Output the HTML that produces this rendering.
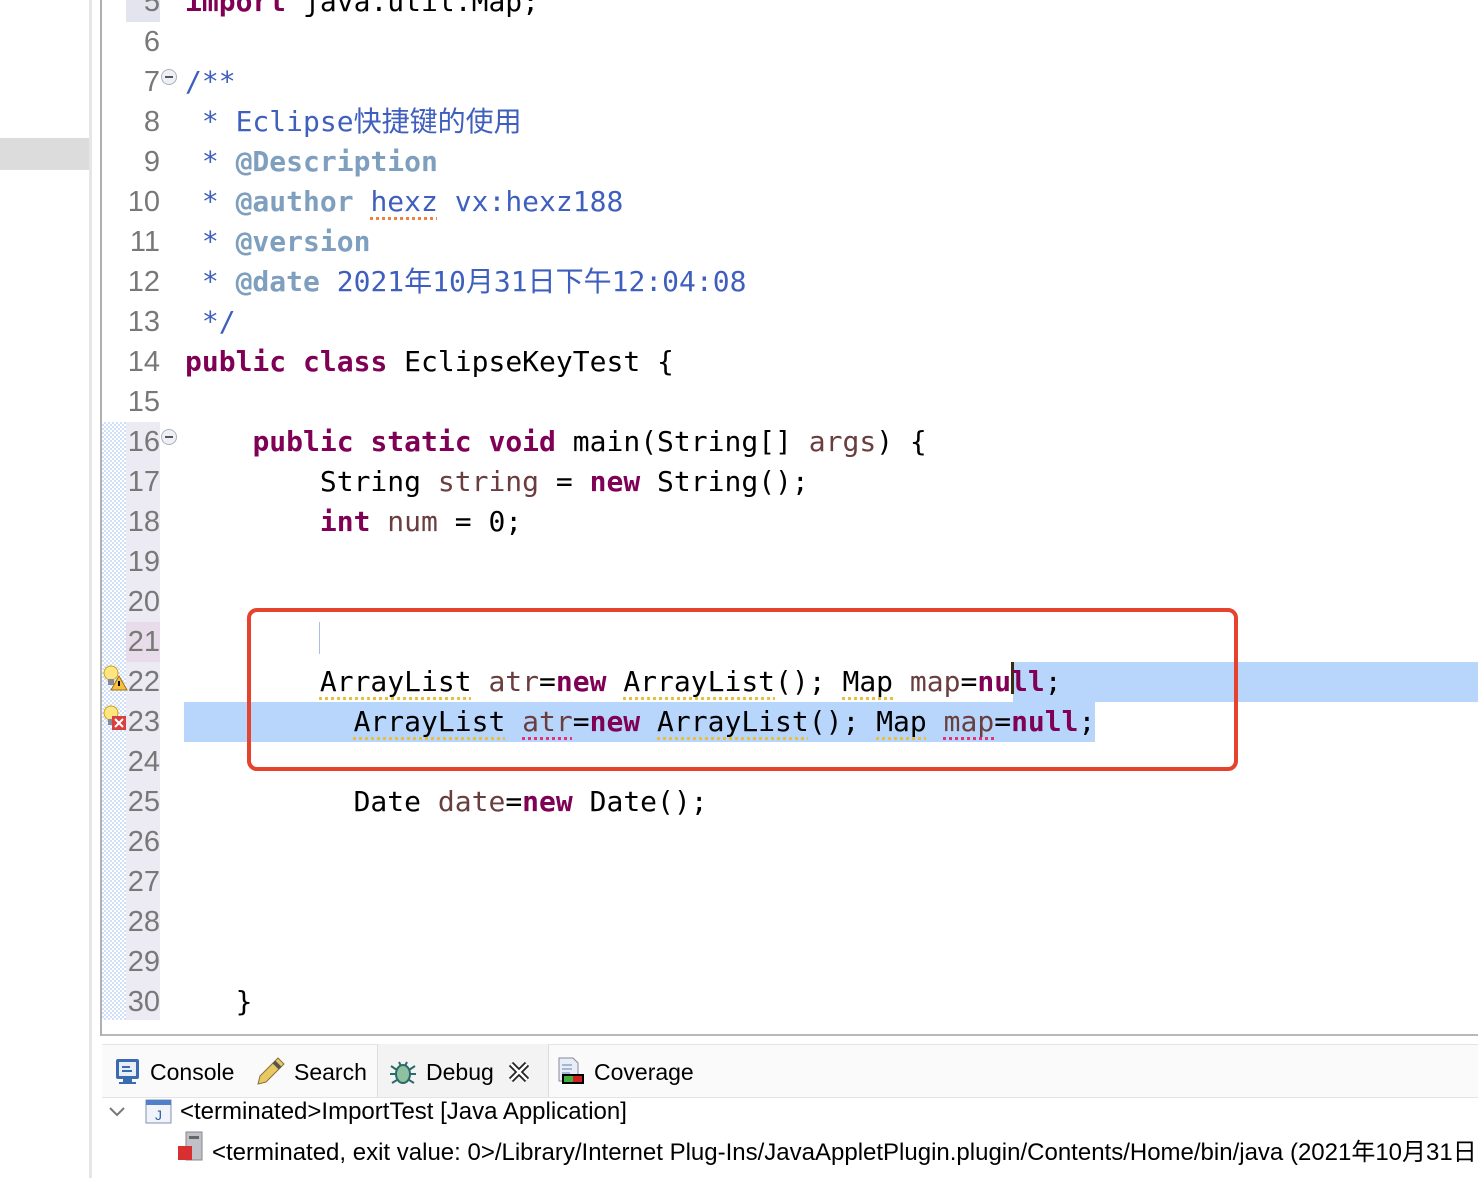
<!DOCTYPE html>
<html><head><meta charset="utf-8"><style>
body{margin:0;width:1478px;height:1178px;overflow:hidden;background:#fff;position:relative;font-family:"DejaVu Sans Mono","Noto Sans CJK SC",monospace}
.a{position:absolute}
.ln{position:absolute;left:100px;width:60px;text-align:right;font-family:"Liberation Sans",sans-serif;font-size:29px;color:#787878;height:40px;line-height:40px}
.c{position:absolute;white-space:pre;font-size:28px;height:40px;line-height:40px;color:#000}
.k{color:#7f0055;font-weight:bold}
.v{color:#6a3e3e}
.cm{color:#3f5fbf}
.t{color:#7f9fbf;font-weight:bold}
.w{text-decoration:underline dotted #e8c040 3px;text-underline-offset:6px}
.e{text-decoration:underline dotted #e83070 3px;text-underline-offset:6px}
.o{text-decoration:underline dotted #f08040 3px;text-underline-offset:6px}
.sel{position:absolute;background:#b8d6fb}
.bt{font-family:"Liberation Sans",sans-serif;font-size:23px;position:absolute;color:#000;white-space:nowrap}
</style></head><body>
<div class="a" style="left:0;top:138px;width:90px;height:32px;background:#dcdcdc"></div>
<div class="a" style="left:89px;top:0;width:3px;height:1178px;background:#e6e6e6"></div>
<div class="a" style="left:100px;top:0;width:2px;height:1036px;background:#b0b0b0"></div>
<div class="a" style="left:102px;top:422px;width:24px;height:598px;background:repeating-conic-gradient(#cfe0f8 0 25%,#fff 0 50%) 0 0/4px 4px"></div>
<div class="a" style="left:126px;top:0;width:34px;height:22px;background:#e4e4ef"></div>
<div class="a" style="left:126px;top:422px;width:34px;height:598px;background:#eceaf2"></div>
<div class="a" style="left:126px;top:622px;width:34px;height:40px;background:#e8dcea"></div>
<div class="a" style="left:102px;top:1034px;width:1376px;height:2px;background:#b8b8b8"></div>

<div class="sel" style="left:1013px;top:662px;width:465px;height:40px"></div>
<div class="sel" style="left:184px;top:702px;width:911px;height:40px"></div>
<div class="a" style="left:1011px;top:662px;width:3px;height:32px;background:#3a2a10"></div>
<div class="a" style="left:319px;top:622px;width:1px;height:32px;background:#a8c0e8"></div>

<div class="ln" style="top:-18px">5</div><div class="ln" style="top:22px">6</div><div class="ln" style="top:62px">7</div><div class="ln" style="top:102px">8</div><div class="ln" style="top:142px">9</div><div class="ln" style="top:182px">10</div><div class="ln" style="top:222px">11</div><div class="ln" style="top:262px">12</div><div class="ln" style="top:302px">13</div><div class="ln" style="top:342px">14</div><div class="ln" style="top:382px">15</div><div class="ln" style="top:422px">16</div><div class="ln" style="top:462px">17</div><div class="ln" style="top:502px">18</div><div class="ln" style="top:542px">19</div><div class="ln" style="top:582px">20</div><div class="ln" style="top:622px">21</div><div class="ln" style="top:662px">22</div><div class="ln" style="top:702px">23</div><div class="ln" style="top:742px">24</div><div class="ln" style="top:782px">25</div><div class="ln" style="top:822px">26</div><div class="ln" style="top:862px">27</div><div class="ln" style="top:902px">28</div><div class="ln" style="top:942px">29</div><div class="ln" style="top:982px">30</div>

<svg class="a" style="left:160px;top:68px" width="18" height="18"><circle cx="9" cy="9" r="7.5" fill="#eef0f4" stroke="#a8b0c0"/><path d="M5 9h8" stroke="#556" stroke-width="2"/></svg>
<svg class="a" style="left:160px;top:428px" width="18" height="18"><circle cx="9" cy="9" r="7.5" fill="#eef0f4" stroke="#a8b0c0"/><path d="M5 9h8" stroke="#556" stroke-width="2"/></svg>
<svg class="a" style="left:102px;top:664px" width="26" height="28"><circle cx="9" cy="9" r="7" fill="#ffe680" stroke="#c8a020"/><rect x="6" y="15" width="6" height="6" fill="#889"/><path d="M17 12l8 14h-16z" fill="#f5c040" stroke="#a07010"/><path d="M17 17v5" stroke="#000" stroke-width="2"/></svg>
<svg class="a" style="left:102px;top:704px" width="26" height="28"><circle cx="9" cy="9" r="7" fill="#ffe680" stroke="#c8a020"/><rect x="6" y="15" width="6" height="6" fill="#889"/><rect x="10" y="12" width="14" height="14" fill="#d84040"/><path d="M13 15l8 8M21 15l-8 8" stroke="#fff" stroke-width="2"/></svg>

<div class="c" style="left:185px;top:-18px"><span class="k">import</span> java.util.Map;</div>
<div class="c cm" style="left:185px;top:62px">/**</div>
<div class="c cm" style="left:185px;top:102px"> * Eclipse快捷键的使用</div>
<div class="c cm" style="left:185px;top:142px"> * <span class="t">@Description</span></div>
<div class="c cm" style="left:185px;top:182px"> * <span class="t">@author</span> <span class="o">hexz</span> vx:hexz188</div>
<div class="c cm" style="left:185px;top:222px"> * <span class="t">@version</span></div>
<div class="c cm" style="left:185px;top:262px"> * <span class="t">@date</span> 2021年10月31日下午12:04:08</div>
<div class="c cm" style="left:185px;top:302px"> */</div>
<div class="c" style="left:185px;top:342px"><span class="k">public</span> <span class="k">class</span> EclipseKeyTest {</div>
<div class="c" style="left:185px;top:422px">    <span class="k">public</span> <span class="k">static</span> <span class="k">void</span> main(String[] <span class="v">args</span>) {</div>
<div class="c" style="left:185px;top:462px">        String <span class="v">string</span> = <span class="k">new</span> String();</div>
<div class="c" style="left:185px;top:502px">        <span class="k">int</span> <span class="v">num</span> = 0;</div>
<div class="c" style="left:185px;top:662px">        <span class="w">ArrayList</span> <span class="v">atr</span>=<span class="k">new</span> <span class="w">ArrayList</span>(); <span class="w">Map</span> <span class="v">map</span>=<span class="k">null</span>;</div>
<div class="c" style="left:185px;top:702px">          <span class="w">ArrayList</span> <span class="v e">atr</span>=<span class="k">new</span> <span class="w">ArrayList</span>(); <span class="w">Map</span> <span class="v e">map</span>=<span class="k">null</span>;</div>
<div class="c" style="left:185px;top:782px">          Date <span class="v">date</span>=<span class="k">new</span> Date();</div>
<div class="c" style="left:185px;top:982px">   }</div>

<div class="a" style="left:247px;top:608px;width:983px;height:155px;border:4px solid #e5432d;border-radius:10px"></div>

<div class="a" style="left:102px;top:1044px;width:1376px;height:52px;background:#fafafa;border-top:1px solid #e4e4e4;border-bottom:1px solid #e4e4e4"></div>
<div class="a" style="left:377px;top:1044px;width:170px;height:53px;background:#f3f3f3;border-left:1px solid #ddd;border-right:1px solid #ddd"></div>
<svg class="a" style="left:114px;top:1058px" width="28" height="28"><rect x="2" y="1" width="23" height="20" rx="2" fill="#3a6ab0"/><rect x="5" y="4" width="17" height="14" fill="#e8eef8"/><path d="M8 9h8M8 13h10" stroke="#3a6ab0" stroke-width="2"/><rect x="9" y="21" width="9" height="3" fill="#3a6ab0"/><rect x="5" y="24" width="17" height="2" fill="#3a6ab0"/></svg>
<div class="bt" style="left:150px;top:1059px">Console</div>
<svg class="a" style="left:254px;top:1056px" width="32" height="32"><path d="M4 28l8-2 18-18-6-6-18 18z" fill="#e8c860" stroke="#8a7040"/><path d="M20 6l6 6" stroke="#555" stroke-width="4"/></svg>
<div class="bt" style="left:294px;top:1059px">Search</div>
<svg class="a" style="left:388px;top:1056px" width="30" height="32"><ellipse cx="15" cy="18" rx="7" ry="9" fill="#8fc0a0" stroke="#2a6a6a" stroke-width="2"/><path d="M3 10l6 4M27 10l-6 4M2 18h6M22 18h6M4 27l5-3M26 27l-5-3M11 6l2 4M19 6l-2 4" stroke="#2a6a6a" stroke-width="2"/></svg>
<div class="bt" style="left:426px;top:1059px">Debug</div>
<svg class="a" style="left:508px;top:1061px" width="22" height="22"><path d="M3 3l16 16M19 3L3 19" stroke="#222" stroke-width="6"/><path d="M3 3l16 16M19 3L3 19" stroke="#fff" stroke-width="2.5"/></svg>
<svg class="a" style="left:556px;top:1056px" width="30" height="30"><path d="M3 2h14l5 5v18H3z" fill="#e8eef8" stroke="#889"/><path d="M6 9h10M6 13h10M6 17h8" stroke="#6080b0"/><rect x="6" y="18" width="22" height="10" fill="#000"/><rect x="8" y="20" width="9" height="6" fill="#40b040"/><rect x="17" y="20" width="9" height="6" fill="#d02020"/></svg>
<div class="bt" style="left:594px;top:1059px">Coverage</div>

<svg class="a" style="left:108px;top:1104px" width="18" height="16"><path d="M2 4l7 7 7-7" fill="none" stroke="#777" stroke-width="2"/></svg>
<svg class="a" style="left:145px;top:1099px" width="28" height="26"><rect x="1" y="1" width="25" height="23" fill="#f0f4fa" stroke="#8090b0"/><rect x="1" y="1" width="25" height="5" fill="#5080c8"/><text x="10" y="21" font-family="Liberation Sans" font-size="14" fill="#3060a0">J</text></svg>
<div class="bt" style="left:180px;top:1098px;font-size:24px">&lt;terminated&gt;ImportTest [Java Application]</div>
<svg class="a" style="left:176px;top:1130px" width="30" height="32"><rect x="10" y="2" width="16" height="28" fill="#c0c0c8" stroke="#888"/><rect x="13" y="6" width="10" height="3" fill="#666"/><rect x="2" y="16" width="14" height="14" fill="#d83030"/></svg>
<div class="bt" style="left:212px;top:1132px;font-size:24px">&lt;terminated, exit value: 0&gt;/Library/Internet Plug-Ins/JavaAppletPlugin.plugin/Contents/Home/bin/java (2021年10月31日 </div>
</body></html>
